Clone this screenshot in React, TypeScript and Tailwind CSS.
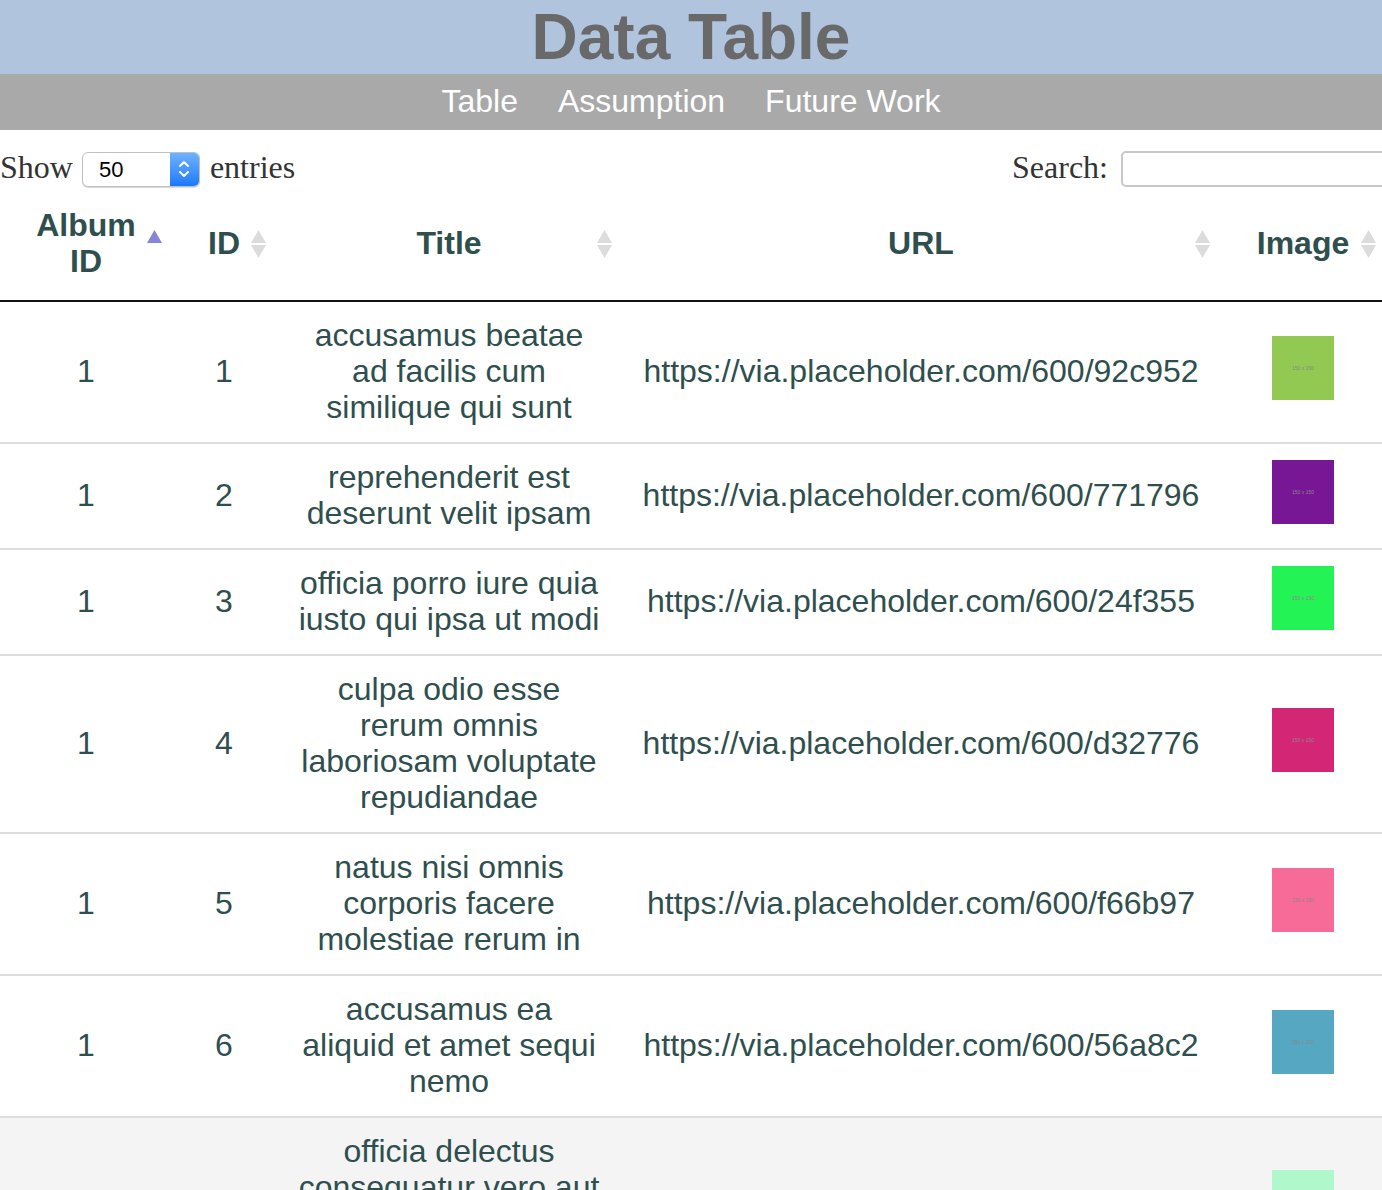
import React from "react";

type Row = { album: number; id: number; lines: string[]; hex: string };

const rows: Row[] = [
  { album: 1, id: 1, lines: ["accusamus beatae", "ad facilis cum", "similique qui sunt"], hex: "92c952" },
  { album: 1, id: 2, lines: ["reprehenderit est", "deserunt velit ipsam"], hex: "771796" },
  { album: 1, id: 3, lines: ["officia porro iure quia", "iusto qui ipsa ut modi"], hex: "24f355" },
  { album: 1, id: 4, lines: ["culpa odio esse", "rerum omnis", "laboriosam voluptate", "repudiandae"], hex: "d32776" },
  { album: 1, id: 5, lines: ["natus nisi omnis", "corporis facere", "molestiae rerum in"], hex: "f66b97" },
  { album: 1, id: 6, lines: ["accusamus ea", "aliquid et amet sequi", "nemo"], hex: "56a8c2" },
  { album: 1, id: 7, lines: ["officia delectus", "consequatur vero aut", "veniam explicabo", "molestias"], hex: "b0f7cc" },
  { album: 1, id: 8, lines: ["aut porro officiis", "laborum odit ea", "laudantium corporis"], hex: "54176f" },
];

function SortIcon({ mode }: { mode: "both" | "asc" }) {
  return (
    <svg width="17" height="30" viewBox="0 0 17 30" className="absolute right-[9px] top-1/2 -translate-y-1/2">
      {mode === "asc" ? (
        <polygon points="1,14 8.5,1 16,14" fill="#8585d9" />
      ) : (
        <>
          <polygon points="1,14 8.5,1 16,14" fill="#dcdcdc" />
          <polygon points="1,16 8.5,29 16,16" fill="#dcdcdc" />
        </>
      )}
    </svg>
  );
}

function Th({ children, mode = "both" }: { children: React.ReactNode; mode?: "both" | "asc" }) {
  return (
    <th className="relative pt-[19px] pb-[21px] px-[20px] text-center font-bold text-[32px] leading-[36px] text-[#2f4f4f] border-b-2 border-[#111]">
      {children}
      <SortIcon mode={mode} />
    </th>
  );
}

export default function App() {
  return (
    <div className="w-[1382px] overflow-hidden bg-white" style={{ fontFamily: '"Liberation Sans", Arial, sans-serif' }}>
      <div className="h-[74px] bg-[#b0c4de] flex items-center justify-center">
        <h1 className="text-[64px] font-bold text-[#696969] leading-none">Data Table</h1>
      </div>
      <div className="h-[56px] pb-[2px] bg-[#a9a9a9] flex items-center justify-center gap-[40px] text-white text-[32px] leading-none">
        <span>Table</span>
        <span>Assumption</span>
        <span>Future Work</span>
      </div>

      <div className="w-[1386px]">
        <div
          className="h-[58px] pt-[20px] flex items-center justify-between text-[32px] text-[#333]"
          style={{ fontFamily: '"Liberation Serif", "Times New Roman", serif' }}
        >
          <div className="flex items-center">
            <span className="leading-[36px] mb-[4px]">Show</span>
            <div className="ml-[9px] mr-[10px] w-[118px] h-[35px] rounded-[6px] border border-[#c0c0c0] bg-white flex items-stretch overflow-hidden shadow-[0_1px_1px_rgba(0,0,0,0.15)]">
              <div className="flex-1 flex items-center pl-[16px] text-[22px] text-black" style={{ fontFamily: '"Liberation Sans", Arial, sans-serif' }}>
                50
              </div>
              <div className="w-[29px] bg-gradient-to-b from-[#6eb2fd] to-[#1a78fb] flex items-center justify-center">
                <svg width="14" height="24" viewBox="0 0 14 24">
                  <polyline points="3,9 7,5 11,9" fill="none" stroke="white" strokeWidth="2" strokeLinecap="round" strokeLinejoin="round" />
                  <polyline points="3,15 7,19 11,15" fill="none" stroke="white" strokeWidth="2" strokeLinecap="round" strokeLinejoin="round" />
                </svg>
              </div>
            </div>
            <span className="leading-[36px] mb-[4px]">entries</span>
          </div>
          <div className="flex items-center">
            <span className="leading-[36px] mb-[4px]">Search:</span>
            <div className="ml-[13px] w-[265px] h-[36px] rounded-[5px] border-2 border-[#c8c8c8] bg-white" />
          </div>
        </div>

        <table className="table-fixed border-collapse w-[1386px]">
          <colgroup>
            <col className="w-[172px]" />
            <col className="w-[104px]" />
            <col className="w-[346px]" />
            <col className="w-[598px]" />
            <col className="w-[166px]" />
          </colgroup>
          <thead>
            <tr>
              <Th mode="asc">
                Album
                <br />
                ID
              </Th>
              <Th>ID</Th>
              <Th>Title</Th>
              <Th>URL</Th>
              <Th>Image</Th>
            </tr>
          </thead>
          <tbody>
            {rows.map((r, i) => (
              <tr
                key={r.id}
                className={`${i === 6 ? "bg-[#f4f4f4]" : "bg-white"} ${i === 0 ? "" : "border-t-2 border-[#dddddd]"} text-[32px] leading-[36px] text-[#2f4f4f] text-center`}
              >
                <td className="pt-[15px] pb-[17px] px-[20px] align-middle">{r.album}</td>
                <td className="pt-[15px] pb-[17px] px-[20px] align-middle">{r.id}</td>
                <td className="pt-[15px] pb-[17px] px-[4px] align-middle whitespace-nowrap">
                  {r.lines.map((l, k) => (
                    <div key={k}>{l}</div>
                  ))}
                </td>
                <td className="pt-[15px] pb-[17px] px-[4px] align-middle whitespace-nowrap">https://via.placeholder.com/600/{r.hex}</td>
                <td className="pt-[16px] pb-[16px] px-[20px] align-middle">
                  <div className="flex justify-center pb-[8px]">
                    <div
                      className="w-[62px] h-[64px] flex items-center justify-center text-[5px] leading-none text-[#888]"
                      style={{ backgroundColor: `#${r.hex}` }}
                    >
                      150 x 150
                    </div>
                  </div>
                </td>
              </tr>
            ))}
          </tbody>
        </table>
      </div>
    </div>
  );
}
